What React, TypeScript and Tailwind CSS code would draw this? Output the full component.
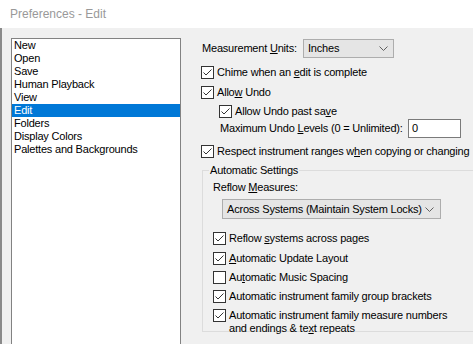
const items = [
  "New",
  "Open",
  "Save",
  "Human Playback",
  "View",
  "Edit",
  "Folders",
  "Display Colors",
  "Palettes and Backgrounds",
];

const Check = ({ checked }: { checked: boolean }) => (
  <svg width="13" height="13" viewBox="0 0 13 13" className="shrink-0">
    <rect x="0.5" y="0.5" width="12" height="12" fill="#fff" stroke="#333" />
    {checked && (
      <polyline points="2.5,6.5 5,9 10.5,3.5" fill="none" stroke="#333" strokeWidth="1" />
    )}
  </svg>
);

const Chevron = () => (
  <svg width="9" height="5" viewBox="0 0 9 5" className="shrink-0">
    <polyline points="0.5,0.5 4.5,4.5 8.5,0.5" fill="none" stroke="#606060" strokeWidth="1" />
  </svg>
);

const CheckRow = ({
  checked,
  className = "",
  children,
}: {
  checked: boolean;
  className?: string;
  children: React.ReactNode;
}) => (
  <div className={`flex items-center gap-[3px] h-[13px] ${className}`}>
    <Check checked={checked} />
    <span className="leading-[13px] whitespace-nowrap">{children}</span>
  </div>
);

export default function App() {
  return (
    <div className="w-[473px] h-[344px] overflow-hidden bg-[#f0f0f0] text-[11px] tracking-[-0.2px] text-black font-['Liberation_Sans',Arial,sans-serif]">
      <div className="h-[28px] bg-white pl-[10px] flex items-center text-[12px] tracking-normal text-[#999]">
        Preferences - Edit
      </div>

      <div className="flex h-[316px] border-l-2 border-[#8a8a8a]">
        {/* category list */}
        <div className="w-[199px] shrink-0 pt-[10px] pl-[9px]">
          <ul className="w-[170px] h-[320px] bg-white border border-[#828282]">
            {items.map((it) => (
              <li
                key={it}
                className={`h-[13px] leading-[13px] pl-[2px] whitespace-nowrap ${
                  it === "Edit" ? "bg-[#0078d7] text-white" : ""
                }`}
              >
                {it}
              </li>
            ))}
          </ul>
        </div>

        {/* edit settings */}
        <div className="flex-1 pt-[11px] flex flex-col">
          <div className="flex items-center h-[19px]">
            <span className="w-[102px] pl-[1px] whitespace-nowrap">
              Measurement <u>U</u>nits:
            </span>
            <div className="w-[91px] h-[19px] bg-[#e5e5e5] border border-[#adadad] flex items-center justify-between pl-[4px] pr-[5px]">
              <span>Inches</span>
              <Chevron />
            </div>
          </div>

          <CheckRow checked className="mt-[8px]">
            Chime when an <u>e</u>dit is complete
          </CheckRow>
          <CheckRow checked className="mt-[7px]">
            Allo<u>w</u> Undo
          </CheckRow>
          <CheckRow checked className="mt-[6px] ml-[18px]">
            Allow Undo past sa<u>v</u>e
          </CheckRow>

          <div className="flex items-center h-[19px] mt-[1px]">
            <span className="w-[207px] pl-[19px] whitespace-nowrap">
              Maximum Undo <u>L</u>evels (0 = Unlimited):
            </span>
            <div className="w-[53px] h-[19px] bg-white border border-[#7a7a7a] pl-[3px] leading-[17px]">
              0
            </div>
          </div>

          <CheckRow checked className="mt-[7px]">
            Respect instrument ranges w<u>h</u>en copying or changing
          </CheckRow>

          <fieldset className="mt-[6px] ml-[1px] w-[300px] h-[168px] border border-[#dcdcdc] pl-[10px]">
            <legend className="ml-[-4px] px-[1px] leading-[13px] whitespace-nowrap">Automatic Settings</legend>
            <div className="leading-[13px] mt-[4px] whitespace-nowrap">
              Reflow <u>M</u>easures:
            </div>
            <div className="mt-[5px] ml-[9px] w-[219px] h-[20px] bg-[#e5e5e5] border border-[#adadad] flex items-center justify-between pl-[4px] pr-[6px]">
              <span className="whitespace-nowrap">Across Systems (Maintain System Locks)</span>
              <Chevron />
            </div>

            <CheckRow checked className="mt-[13px]">
              Reflow <u>s</u>ystems across pages
            </CheckRow>
            <CheckRow checked className="mt-[7px]">
              <u>A</u>utomatic Update Layout
            </CheckRow>
            <CheckRow checked={false} className="mt-[6px]">
              Au<u>t</u>omatic Music Spacing
            </CheckRow>
            <CheckRow checked className="mt-[6px]">
              Automatic instrument family <u>g</u>roup brackets
            </CheckRow>
            <div className="flex items-start gap-[3px] mt-[6px]">
              <Check checked />
              <span className="leading-[13px] whitespace-nowrap">
                Automatic instrument family measure numbers
                <br />
                and endings &amp; te<u>x</u>t repeats
              </span>
            </div>
          </fieldset>
        </div>
      </div>
    </div>
  );
}
